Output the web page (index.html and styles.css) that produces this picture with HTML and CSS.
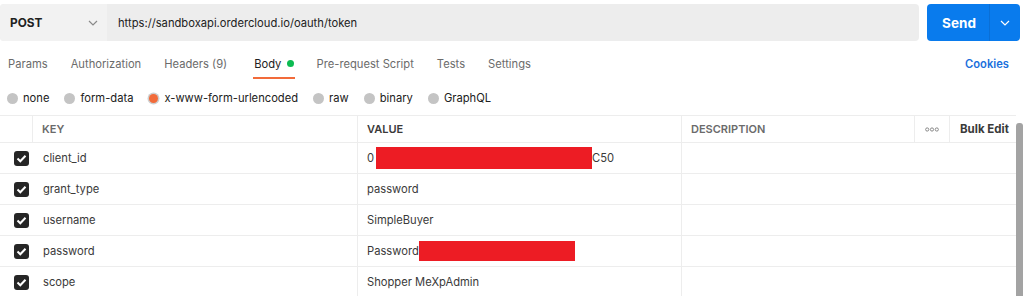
FILE: index.html
```html
<!DOCTYPE html>
<html lang="en">
<head>
    <meta charset="UTF-8">
    <meta name="viewport" content="width=device-width, initial-scale=1.0">
    <title>POST token</title>
    <link rel="stylesheet" href="styles.css">
</head>
<body>

    <div class="request-bar">
        <div class="url-box">
            <div class="method">
                <span>POST</span>
                <svg class="chevron" width="10" height="6" viewBox="0 0 10 6"><path d="M1 1l4 4 4-4" fill="none" stroke="#8a8a8a" stroke-width="1.2"/></svg>
            </div>
            <div class="url">https://sandboxapi.ordercloud.io/oauth/token</div>
        </div>
        <div class="send">
            <span class="send-label">Send</span>
            <span class="send-more">
                <svg width="10" height="6" viewBox="0 0 10 6"><path d="M1 1l4 4 4-4" fill="none" stroke="#fff" stroke-width="1.2"/></svg>
            </span>
        </div>
    </div>

    <div class="tabs">
        <span class="tab">Params</span>
        <span class="tab">Authorization</span>
        <span class="tab">Headers <span class="count">(9)</span></span>
        <span class="tab active">Body <i class="dot"></i></span>
        <span class="tab">Pre-request Script</span>
        <span class="tab">Tests</span>
        <span class="tab">Settings</span>
        <span class="cookies">Cookies</span>
    </div>

    <div class="body-types">
        <label class="radio"><i class="circle"></i>none</label>
        <label class="radio"><i class="circle"></i>form-data</label>
        <label class="radio"><i class="circle on"></i>x-www-form-urlencoded</label>
        <label class="radio"><i class="circle"></i>raw</label>
        <label class="radio"><i class="circle"></i>binary</label>
        <label class="radio"><i class="circle"></i>GraphQL</label>
    </div>

    <div class="table-wrap">
        <div class="params">
            <div class="row head">
                <div class="cell check"></div>
                <div class="cell key">KEY</div>
                <div class="cell value">VALUE</div>
                <div class="cell desc">DESCRIPTION</div>
                <div class="cell more">
                    <svg width="14" height="5" viewBox="0 0 14 5"><g fill="none" stroke="#8a8a8a" stroke-width="1"><circle cx="2.2" cy="2.5" r="1.6"/><circle cx="7" cy="2.5" r="1.6"/><circle cx="11.8" cy="2.5" r="1.6"/></g></svg>
                </div>
                <div class="cell bulk">Bulk Edit</div>
            </div>
            <div class="row">
                <div class="cell check"><span class="box"><svg width="11" height="9" viewBox="0 0 11 9"><path d="M1.5 4.5l2.8 2.8 5.2-5.6" fill="none" stroke="#fff" stroke-width="2"/></svg></span></div>
                <div class="cell key">client_id</div>
                <div class="cell value">0<span class="redact redact-id"></span>C50</div>
                <div class="cell desc"></div>
            </div>
            <div class="row">
                <div class="cell check"><span class="box"><svg width="11" height="9" viewBox="0 0 11 9"><path d="M1.5 4.5l2.8 2.8 5.2-5.6" fill="none" stroke="#fff" stroke-width="2"/></svg></span></div>
                <div class="cell key">grant_type</div>
                <div class="cell value">password</div>
                <div class="cell desc"></div>
            </div>
            <div class="row">
                <div class="cell check"><span class="box"><svg width="11" height="9" viewBox="0 0 11 9"><path d="M1.5 4.5l2.8 2.8 5.2-5.6" fill="none" stroke="#fff" stroke-width="2"/></svg></span></div>
                <div class="cell key">username</div>
                <div class="cell value">SimpleBuyer</div>
                <div class="cell desc"></div>
            </div>
            <div class="row">
                <div class="cell check"><span class="box"><svg width="11" height="9" viewBox="0 0 11 9"><path d="M1.5 4.5l2.8 2.8 5.2-5.6" fill="none" stroke="#fff" stroke-width="2"/></svg></span></div>
                <div class="cell key">password</div>
                <div class="cell value">Password<span class="redact redact-pw"></span></div>
                <div class="cell desc"></div>
            </div>
            <div class="row">
                <div class="cell check"><span class="box"><svg width="11" height="9" viewBox="0 0 11 9"><path d="M1.5 4.5l2.8 2.8 5.2-5.6" fill="none" stroke="#fff" stroke-width="2"/></svg></span></div>
                <div class="cell key">scope</div>
                <div class="cell value">Shopper MeXpAdmin</div>
                <div class="cell desc"></div>
            </div>
        </div>
        <div class="scrollbar"></div>
    </div>

</body>
</html>
```

FILE: styles.css
```css
/* Общие стили */
body {
    margin: 0;
    background: #fff;
    font-family: 'Inter', 'Noto Sans', sans-serif;
    font-size: 11.2px;
    color: #212121;
    overflow: hidden;
}

/* Строка запроса */
.request-bar {
    display: flex;
    gap: 8px;
    padding: 4px 3px 0 0;
    height: 37px;
}

.url-box {
    flex: 1;
    display: flex;
    background: #ededed;
    border-radius: 4px;
    overflow: hidden;
}

.method {
    width: 107px;
    display: flex;
    align-items: center;
    justify-content: space-between;
    padding: 0 9px 0 10px;
    box-sizing: border-box;
    background: #f2f2f2;
    font-weight: 700;
    font-size: 11.8px;
}

.url {
    display: flex;
    align-items: center;
    padding-left: 11px;
    color: #212121;
}

.send {
    width: 93px;
    display: flex;
    background: #097bed;
    border-radius: 4px;
    color: #fff;
}

.send-label {
    flex: 1;
    display: flex;
    align-items: center;
    justify-content: center;
    font-weight: 700;
    font-size: 13.5px;
    padding-left: 2px;
}

.send-more {
    width: 30px;
    display: flex;
    align-items: center;
    justify-content: center;
    border-left: 1px solid #0a6fd6;
}

/* Вкладки */
.tabs {
    display: flex;
    align-items: center;
    height: 30px;
    margin-top: 8px;
    padding-left: 8px;
    padding-right: 14px;
    gap: 23px;
}

.tab {
    position: relative;
    color: #6b6b6b;
    height: 30px;
    line-height: 30px;
}

.tab.active {
    color: #212121;
    margin-left: 4px;
}

.tab.active::after {
    content: "";
    position: absolute;
    left: -1px;
    right: -1px;
    bottom: 0;
    height: 2px;
    background: #f26b3a;
}

.dot {
    display: inline-block;
    width: 7px;
    height: 7px;
    border-radius: 50%;
    background: #0cbb52;
    margin-left: 2px;
    vertical-align: 1px;
}

.cookies {
    margin-left: auto;
    color: #1a6fdc;
    font-weight: 600;
}

/* Типы тела запроса */
.body-types {
    display: flex;
    align-items: center;
    height: 22px;
    margin-top: 8px;
    padding-left: 7px;
    gap: 15px;
}

.radio {
    display: flex;
    align-items: center;
    gap: 5px;
    color: #212121;
}

.circle {
    display: inline-block;
    width: 11px;
    height: 11px;
    border-radius: 50%;
    background: #c4c4c4;
}

.circle.on {
    width: 9px;
    height: 9px;
    margin: 0 1px;
    background: #f26b3a;
    box-shadow: 0 0 0 1.5px #cfcfcf;
}

/* Таблица параметров */
.table-wrap {
    display: flex;
    margin-top: 6px;
}

.params {
    flex: 1;
    border-top: 1px solid #ededed;
}

.row {
    display: flex;
    height: 31px;
    border-bottom: 1px solid #ededed;
    box-sizing: border-box;
}

.row.head {
    height: 27px;
    font-weight: 600;
    color: #6b6b6b;
    font-size: 11px;
}

.cell {
    display: flex;
    align-items: center;
    box-sizing: border-box;
}

.check {
    width: 33px;
    justify-content: center;
    padding-left: 9px;
}

.head .check {
    border-right: 1px solid #ededed;
}

.key {
    width: 325px;
    padding-left: 9px;
    border-right: 1px solid #ededed;
    color: #3a3a3a;
}

.row:not(.head) .key {
    padding-left: 10px;
}

.head .key {
    color: #6b6b6b;
}

.value {
    width: 324px;
    padding-left: 9px;
    border-right: 1px solid #ededed;
    color: #3a3a3a;
}

.desc {
    flex: 1;
    padding-left: 9px;
}

.head .desc {
    flex: none;
    width: 233px;
    border-right: 1px solid #ededed;
}

.more {
    width: 35px;
    justify-content: center;
    border-right: 1px solid #ededed;
}

.bulk {
    flex: 1;
    padding-left: 10px;
    color: #3a3a3a;
    font-weight: 700;
    font-size: 11.5px;
}

.box {
    display: inline-flex;
    align-items: center;
    justify-content: center;
    width: 15px;
    height: 15px;
    border-radius: 3px;
    background: #262626;
}

.redact {
    display: inline-block;
    background: #ed1c24;
}

.redact-id {
    width: 216px;
    height: 22px;
    margin-left: 2px;
}

.redact-pw {
    width: 156px;
    height: 20px;
}

.scrollbar {
    width: 7px;
    margin-top: 8px;
    background: #a3a3a3;
    border-radius: 3px 3px 0 0;
}
```
